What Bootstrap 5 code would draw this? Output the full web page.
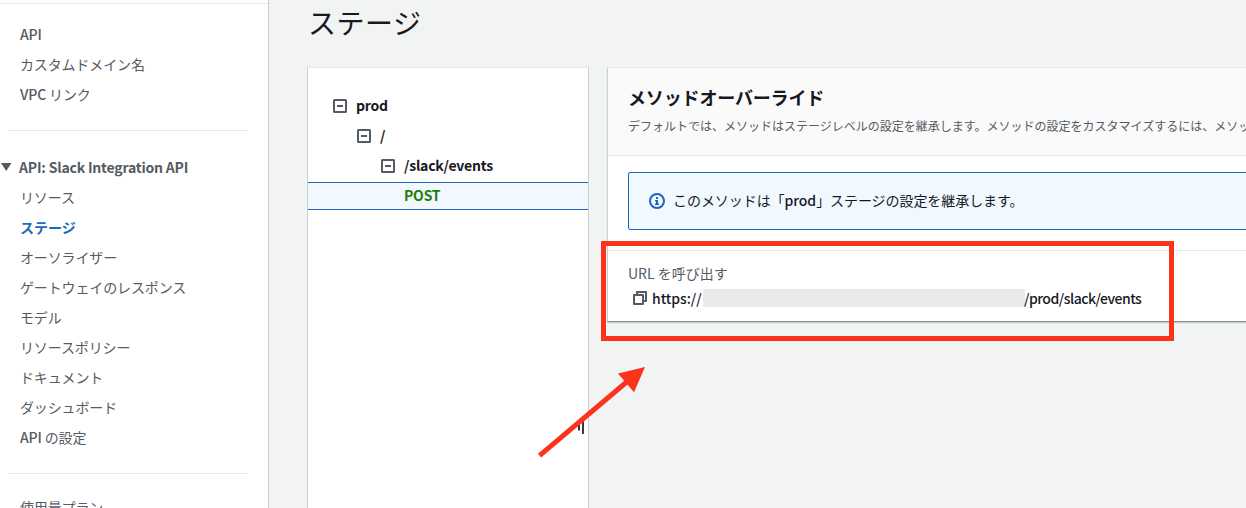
<!DOCTYPE html>
<html lang="ja">
<head>
<meta charset="utf-8">
<meta name="viewport" content="width=device-width, initial-scale=1">
<title>ステージ</title>
<link href="https://cdn.jsdelivr.net/npm/bootstrap@5.3.0/dist/css/bootstrap.min.css" rel="stylesheet">
<style>
  body { font-family: "Noto Sans CJK JP", sans-serif; font-size: 14px; line-height: 30px; color: #16191f; background: #f2f3f3; height: 508px; }
  .side { width: 269px; border-right: 1px solid #c5cccd; color: #545b64; }
  .side-top { height: 4px; border-bottom: 1px solid #e6e9e9; }
  .side .nav-link { padding: 0; color: #545b64; height: 30px; white-space: nowrap; letter-spacing: -.13px; }
  .side .nav-link.active { color: #1f66bd; font-weight: 700; letter-spacing: 0; }
  .side-group { padding-left: 20px; }
  .side-first { padding-top: 15px; }
  .side-last { padding-top: 18px; }
  .rule { height: 1px; background: #e6e9e9; margin: 21px 0 0 8px; width: 240px; }
  .group-head { margin-top: 21px; height: 30px; }
  .group-head span { letter-spacing: -.2px; line-height: 28px; margin-top: -1px; }
  .en { font-weight: 500; }
  .page-head { font-size: 28px; font-weight: 400; line-height: 36px; margin: 4px 0 27px 1px; letter-spacing: .5px; }
  .work { padding-left: 38px; }
  .panel { background: #fff; border: 1px solid #c9d0d1; border-top-color: #e6e9e9; border-radius: 0; }
  .tree { width: 282px; height: 460px; padding-top: 23px; }
  .tree-row { height: 30px; font-weight: 700; gap: 9px; letter-spacing: -.22px; }
  .tree-row span { line-height: 28px; margin-top: -2px; }
  .tree-row.picked { height: 28px; margin-top: 1px; background: #f1f8ff; border: solid #1f66bd; border-width: 1px 0; color: #1d8102; line-height: 25px; padding-left: 96px; }
  .level-1 { padding-left: 25px; }
  .level-2 { padding-left: 49px; }
  .level-3 { padding-left: 73px; }
  .detail { width: 700px; height: 255px; border-bottom-color: #879596; box-shadow: 0 1px 1px #c4cbcc; }
  .detail-head { background: #fafafa; border-bottom: 1px solid #e6e9e9; height: 88px; padding: 15px 20px; }
  .detail-head h2 { font-size: 18px; font-weight: 700; line-height: 28px; margin: 0; letter-spacing: -.15px; }
  .detail-head p { font-size: 12px; line-height: 30px; color: #545b64; margin: 0; white-space: nowrap; }
  .note { height: 58px; margin: 16px 20px 20px; border: 1px solid #1f66bd; border-radius: 2px; background: #f1f8ff; color: #16191f; padding: 0 20px; gap: 8px; }
  .note > span { margin-top: -2px; letter-spacing: -.06px; }
  .invoke { border-top: 1px solid #e6e9e9; padding: 11px 20px 0; line-height: 22px; }
  .invoke-label { color: #545b64; height: 24px; }
  .invoke-url { height: 24px; padding-left: 5px; font-weight: 500; }
  .veil { width: 322px; height: 18px; background: #eaeaea; margin-left: 1px; }
  .url-a { margin-left: 4px; width: 50px; letter-spacing: -.05px; }
  .url-b { letter-spacing: -.5px; margin-left: -1px; }
  .marks { left: 0; top: 0; pointer-events: none; }
</style>
</head>
<body class="d-flex overflow-hidden position-relative">
  <aside class="side bg-white flex-shrink-0 h-100 overflow-hidden">
    <div class="side-top"></div>
    <nav class="nav flex-column flex-nowrap side-group side-first">
      <a class="nav-link"><span class="en">API</span></a>
      <a class="nav-link">カスタムドメイン名</a>
      <a class="nav-link"><span class="en">VPC</span> リンク</a>
    </nav>
    <div class="rule"></div>
    <div class="group-head d-flex align-items-center fw-bold">
      <svg class="flex-shrink-0" width="19" height="10"><path d="M1 1h10.500L6.200 9z" fill="#545b64"/></svg><span>API: Slack Integration API</span>
    </div>
    <nav class="nav flex-column flex-nowrap side-group">
      <a class="nav-link">リソース</a>
      <a class="nav-link active">ステージ</a>
      <a class="nav-link">オーソライザー</a>
      <a class="nav-link">ゲートウェイのレスポンス</a>
      <a class="nav-link">モデル</a>
      <a class="nav-link">リソースポリシー</a>
      <a class="nav-link">ドキュメント</a>
      <a class="nav-link">ダッシュボード</a>
      <a class="nav-link"><span class="en">API</span> の設定</a>
    </nav>
    <div class="rule"></div>
    <nav class="nav flex-column flex-nowrap side-group side-last">
      <a class="nav-link">使用量プラン</a>
    </nav>
  </aside>

  <main class="work flex-shrink-0">
    <h1 class="page-head">ステージ</h1>
    <div class="d-flex align-items-start" style="gap:18px">
      <section class="panel tree">
        <div class="tree-row level-1 d-flex align-items-center">
          <svg width="14" height="14" fill="none" stroke="#545b64" stroke-width="2"><rect x="1" y="1" width="12" height="12" rx=".5"/><path d="M4 7h6"/></svg><span>prod</span>
        </div>
        <div class="tree-row level-2 d-flex align-items-center">
          <svg width="14" height="14" fill="none" stroke="#545b64" stroke-width="2"><rect x="1" y="1" width="12" height="12" rx=".5"/><path d="M4 7h6"/></svg><span>/</span>
        </div>
        <div class="tree-row level-3 d-flex align-items-center">
          <svg width="14" height="14" fill="none" stroke="#545b64" stroke-width="2"><rect x="1" y="1" width="12" height="12" rx=".5"/><path d="M4 7h6"/></svg><span>/slack/events</span>
        </div>
        <div class="tree-row picked">POST</div>
      </section>

      <section class="panel detail">
        <header class="detail-head">
          <h2>メソッドオーバーライド</h2>
          <p>デフォルトでは、メソッドはステージレベルの設定を継承します。メソッドの設定をカスタマイズするには、メソッドを</p>
        </header>
        <div class="note d-flex align-items-center">
          <svg width="16" height="16" viewBox="0 0 16 16"><circle cx="8" cy="8" r="7" fill="none" stroke="#1f66bd" stroke-width="2"/><path d="M7 4h2v2H7zM6 7h3v3.500h1V12H6v-1.500h1v-2H6z" fill="#1f66bd"/></svg>
          <span>このメソッドは「<span class="en">prod</span>」ステージの設定を継承します。</span>
        </div>
        <div class="invoke">
          <div class="invoke-label">URL を呼び出す</div>
          <div class="invoke-url d-flex align-items-center">
            <svg class="flex-shrink-0" width="15" height="14" fill="none" stroke="#545b64" stroke-width="2" stroke-linejoin="round"><path d="M1 4h9v9H1zM4 4V1h9v9h-3"/></svg>
            <span class="url-a">https://</span><span class="veil"></span><span class="url-b">/prod/slack/events</span>
          </div>
        </div>
      </section>
    </div>
  </main>

  <svg class="marks position-absolute" width="1246" height="508">
    <path d="M579 420v10.500M583 416v18" stroke="#16191f" stroke-width="1.700"/>
    <rect x="603.500" y="243.500" width="568" height="95" fill="none" stroke="#fc331c" stroke-width="5"/>
    <path d="M539.500 455.700L629 380" stroke="#fc331c" stroke-width="5"/>
    <path d="M645 367L618 373.500L634 392.300z" fill="#fc331c"/>
  </svg>
<script src="https://cdn.jsdelivr.net/npm/bootstrap@5.3.0/dist/js/bootstrap.bundle.min.js"></script>
</body>
</html>
